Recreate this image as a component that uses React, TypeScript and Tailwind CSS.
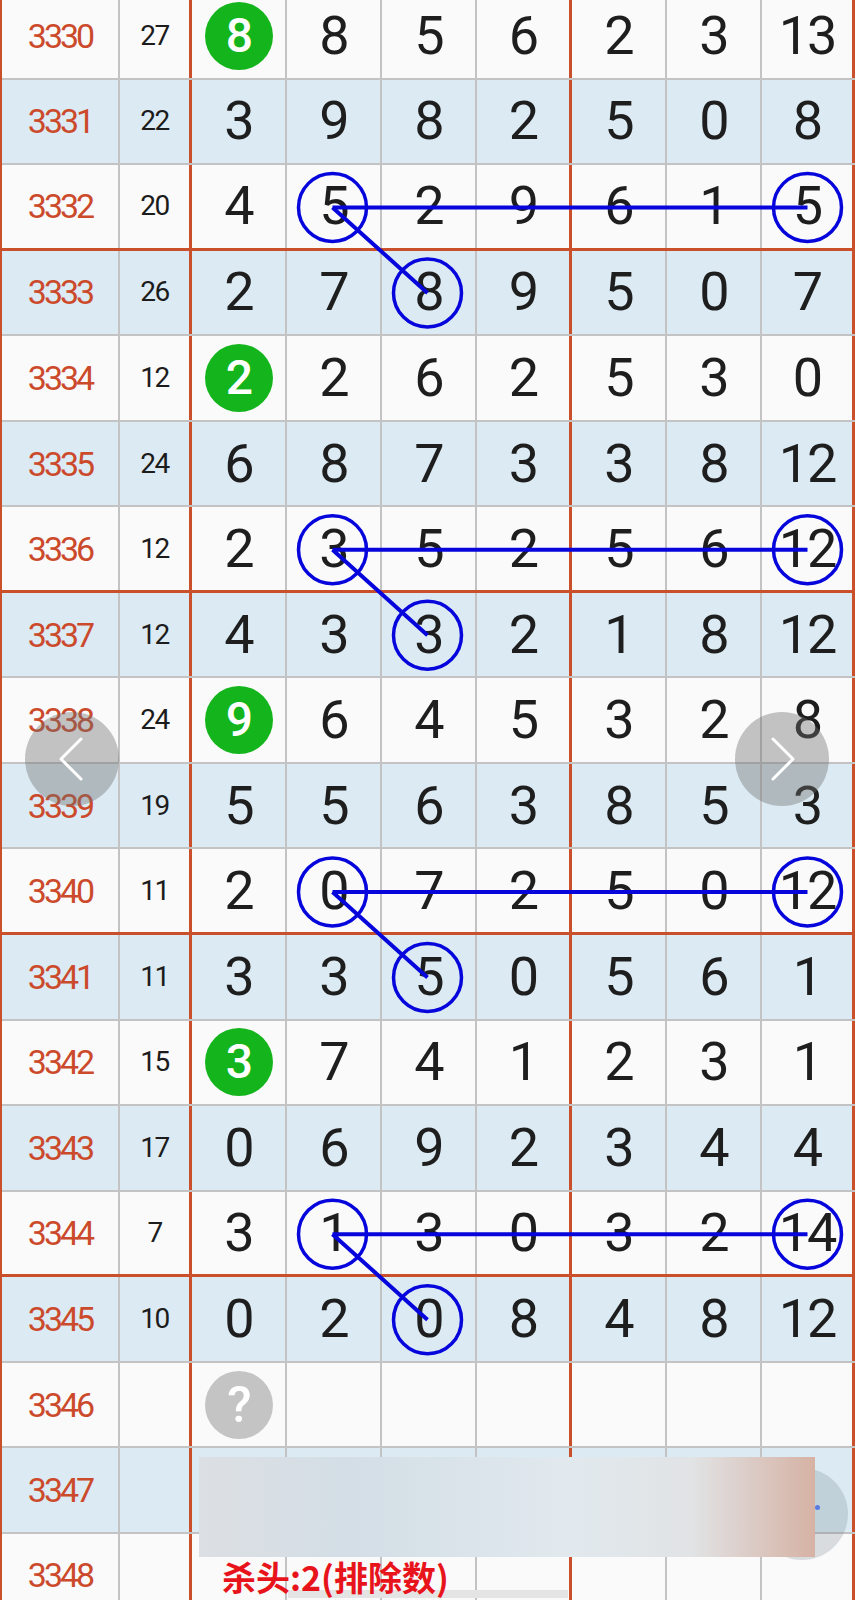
import React from "react";

type Row = {
  no: number;
  sum?: number;
  head?: number | "?";
  nums: number[];
};

const rows: Row[] = [
  { no: 3330, sum: 27, head: 8, nums: [8, 5, 6, 2, 3, 13] },
  { no: 3331, sum: 22, nums: [3, 9, 8, 2, 5, 0, 8] },
  { no: 3332, sum: 20, nums: [4, 5, 2, 9, 6, 1, 5] },
  { no: 3333, sum: 26, nums: [2, 7, 8, 9, 5, 0, 7] },
  { no: 3334, sum: 12, head: 2, nums: [2, 6, 2, 5, 3, 0] },
  { no: 3335, sum: 24, nums: [6, 8, 7, 3, 3, 8, 12] },
  { no: 3336, sum: 12, nums: [2, 3, 5, 2, 5, 6, 12] },
  { no: 3337, sum: 12, nums: [4, 3, 3, 2, 1, 8, 12] },
  { no: 3338, sum: 24, head: 9, nums: [6, 4, 5, 3, 2, 8] },
  { no: 3339, sum: 19, nums: [5, 5, 6, 3, 8, 5, 3] },
  { no: 3340, sum: 11, nums: [2, 0, 7, 2, 5, 0, 12] },
  { no: 3341, sum: 11, nums: [3, 3, 5, 0, 5, 6, 1] },
  { no: 3342, sum: 15, head: 3, nums: [7, 4, 1, 2, 3, 1] },
  { no: 3343, sum: 17, nums: [0, 6, 9, 2, 3, 4, 4] },
  { no: 3344, sum: 7, nums: [3, 1, 3, 0, 3, 2, 14] },
  { no: 3345, sum: 10, nums: [0, 2, 0, 8, 4, 8, 12] },
  { no: 3346, head: "?", nums: [] },
  { no: 3347, nums: [] },
  { no: 3348, nums: [] },
];

// width + right border of the seven number columns
const numCols = [
  "w-[95px] border-r-2 border-[#c3c3c3]",
  "w-[95px] border-r-2 border-[#c3c3c3]",
  "w-[95px] border-r-2 border-[#c3c3c3]",
  "w-[95px] border-r-[3px] border-[#c9502b]",
  "w-[95px] border-r-2 border-[#c3c3c3]",
  "w-[95px] border-r-2 border-[#c3c3c3]",
  "w-[93px] border-r-[3px] border-[#c9502b]",
];

const RH = 85.56;
const cx = (k: number) => 192 + k * 95 + 45.5;
const cy = (i: number) => i * RH + 42.3;
// rows (index) holding the circled pattern
const marks = [2, 6, 10, 14];

function Head({ v }: { v: number | "?" }) {
  if (v === "?") {
    return (
      <div className="w-[68px] h-[68px] rounded-full bg-[#c4c4c4] flex items-center justify-center text-white text-[50px] leading-none font-medium">
        ?
      </div>
    );
  }
  return (
    <div className="w-[68px] h-[68px] rounded-full bg-[#14b51c] flex items-center justify-center text-white text-[48px] leading-none font-medium">
      {v}
    </div>
  );
}

function Arrow({ dir }: { dir: "l" | "r" }) {
  return (
    <div className="w-[94px] h-[94px] rounded-full bg-[rgba(110,110,110,0.4)] flex items-center justify-center">
      <svg width="30" height="46" viewBox="0 0 30 46">
        <polyline
          points={dir === "l" ? "24,3 4,23 24,43" : "6,3 26,23 6,43"}
          fill="none"
          stroke="#fff"
          strokeWidth="3"
          strokeLinecap="round"
          strokeLinejoin="round"
        />
      </svg>
    </div>
  );
}

export default function App() {
  return (
    <div
      className="relative w-[855px] h-[1600px] overflow-hidden bg-[#fafafa]"
      style={{ fontFamily: "Roboto, 'Noto Sans', sans-serif" }}
    >
      <div className="relative mt-[-6px] border-l-2 border-[#c9502b]">
        {rows.map((r, i) => {
          const cells: (number | "?" | null)[] = r.head !== undefined ? [r.head, ...r.nums] : r.nums;
          return (
            <div
              key={r.no}
              className={
                "flex h-[85.56px] " +
                (r.no % 4 === 0 ? "border-b-[3px] border-[#c9502b] " : "border-b-2 border-[#c3c3c3] ") +
                (i % 2 === 1 ? "bg-[#dcebf3]" : "bg-[#fafafa]")
              }
            >
              <div className="w-[118px] border-r-2 border-[#c3c3c3] flex items-center justify-center text-[34px] leading-none tracking-[-3px] text-[#cc4a2c]">
                {r.no}
              </div>
              <div className="w-[72px] border-r-[3px] border-[#c9502b] flex items-center justify-center text-[28px] leading-none tracking-[-1.5px] text-[#1c1c1c]">
                {r.sum}
              </div>
              {numCols.map((c, k) => {
                const v = cells[k];
                return (
                  <div key={k} className={c + " flex items-center justify-center text-[54px] leading-none tracking-[-2px] text-[#1e1e1e]"}>
                    {k === 0 && r.head !== undefined ? <Head v={r.head} /> : v}
                  </div>
                );
              })}
            </div>
          );
        })}

        <svg className="absolute left-[-2px] top-0 pointer-events-none" width={855} height={19 * RH}>
          {marks.map((i) => (
            <g key={i} stroke="#0505dc" fill="none">
              <line x1={cx(1)} y1={cy(i)} x2={cx(6)} y2={cy(i)} strokeWidth={4} />
              <line x1={cx(1)} y1={cy(i)} x2={cx(2)} y2={cy(i + 1)} strokeWidth={4} />
              <circle cx={cx(1)} cy={cy(i)} r={34} strokeWidth={3.5} />
              <circle cx={cx(6)} cy={cy(i)} r={34} strokeWidth={3.5} />
              <circle cx={cx(2)} cy={cy(i + 1)} r={34} strokeWidth={3.5} />
            </g>
          ))}
        </svg>
      </div>

      {/* prev / next */}
      <div className="absolute left-[25px] top-[712px] w-[804px] flex justify-between">
        <Arrow dir="l" />
        <Arrow dir="r" />
      </div>

      {/* floating banner */}
      <div className="absolute left-[199px] top-[1457px] w-[649px]">
        <div className="absolute left-[557px] top-[11px] w-[92px] h-[92px] rounded-full bg-[rgba(110,125,140,0.24)]" />
        <div className="relative flex items-center">
          <div className="w-[616px] h-[100px] bg-[linear-gradient(90deg,#dcdfe3_0%,#d3dee6_25%,#e1e9ee_60%,#e1e3e5_80%,#d6b2a4_100%)]" />
          <div className="ml-[0px] w-[5px] h-[5px] rounded-full bg-[#5a7be0]" />
        </div>
        <div
          className="relative ml-[23px] mt-[3px] text-[34px] font-bold leading-none text-[#e8141c]"
          style={{ fontFamily: "'Noto Sans CJK SC', sans-serif" }}
        >
          杀头:2(排除数)
        </div>
        <div className="ml-[89px] mt-[-4px] w-[280px] h-[8px] bg-[#e4e4e4]" />
      </div>
    </div>
  );
}
